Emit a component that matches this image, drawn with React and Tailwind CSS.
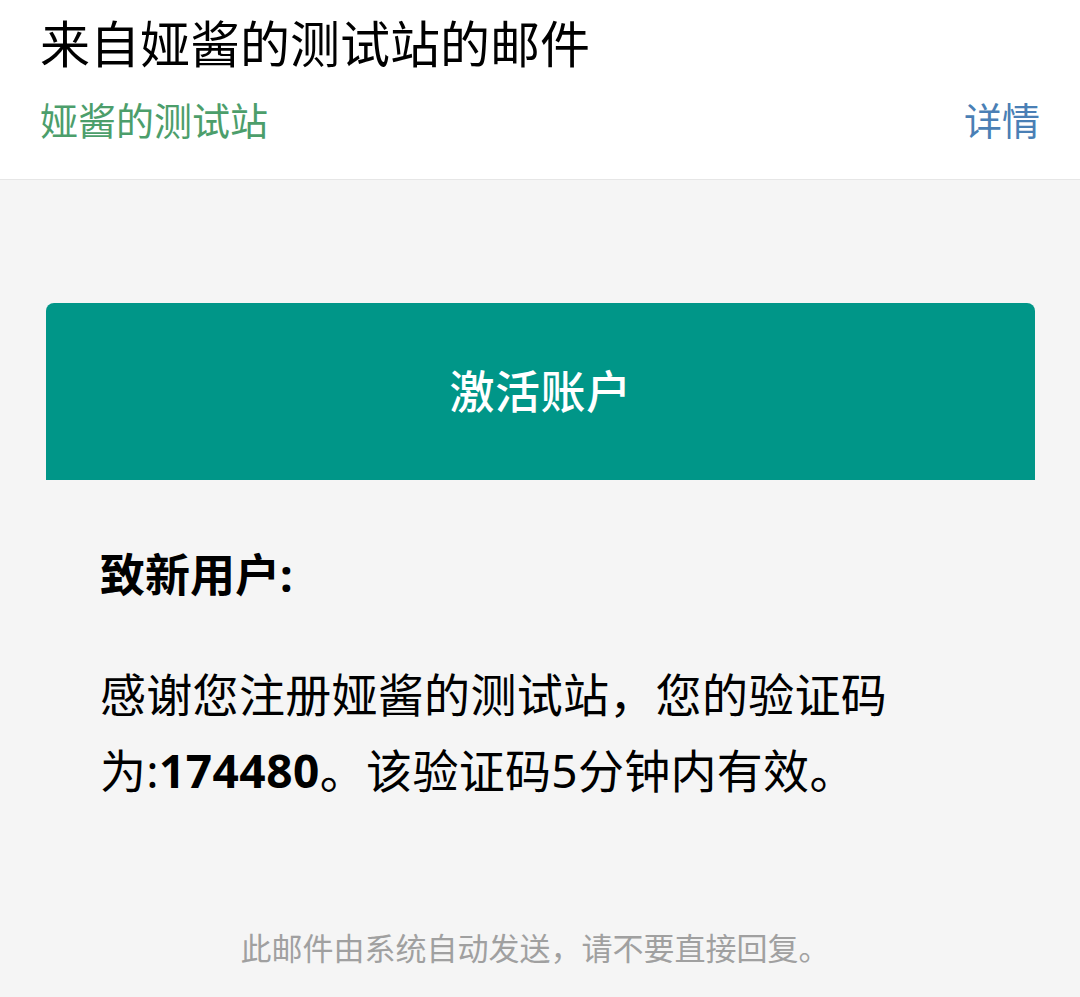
import React from "react";

const font = { fontFamily: '"Noto Sans", "Noto Sans CJK SC", sans-serif' };

const App = () => {
  return (
    <div className="w-[1080px] h-[997px] bg-[#f5f5f5] overflow-hidden" style={font}>
      <div className="bg-white h-[180px] border-b border-[#e6e6e6] px-[40px]">
        <h1 className="pt-[14px] text-[50px] leading-[60px] text-black font-normal">
          来自娅酱的测试站的邮件
        </h1>
        <div className="mt-[21px] flex items-center justify-between">
          <span className="text-[38px] leading-[50px] text-[#4c9e6b]">娅酱的测试站</span>
          <span className="text-[38px] leading-[50px] text-[#4a7fb5]">详情</span>
        </div>
      </div>

      <div className="pt-[123px]">
        <div className="ml-[46px] w-[989px] h-[177px] bg-[#009688] rounded-t-lg flex items-center justify-center">
          <span className="text-white text-[45px] font-medium tracking-[0.5px]">激活账户</span>
        </div>

        <div className="px-[100px]">
          <p className="mt-[65px] text-[45px] leading-[60px] font-bold text-black">致新用户:</p>
          <p className="mt-[51px] w-[820px] text-[46px] leading-[76px] tracking-[0.3px] text-black">
            感谢您注册娅酱的测试站，您的验证码为:<b className="font-bold tracking-[0.5px]">174480</b>。该验证码5分钟内有效。
          </p>
        </div>

        <p className="mt-[120px] text-center text-[31px] leading-[40px] text-[#a0a0a0] pr-[10px]">
          此邮件由系统自动发送，请不要直接回复。
        </p>
      </div>
    </div>
  );
};

export default App;
